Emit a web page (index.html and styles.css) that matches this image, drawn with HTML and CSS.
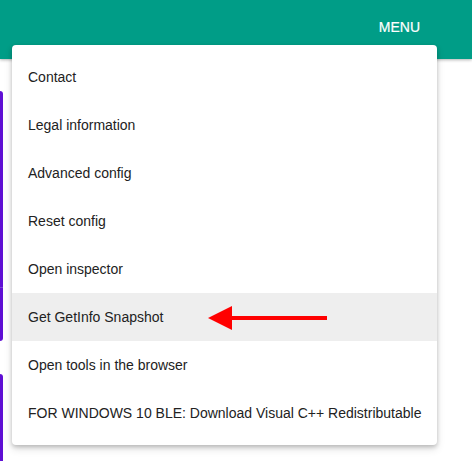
FILE: index.html
```html
<!DOCTYPE html>
<html>
<head>
<meta charset="utf-8">
<link rel="stylesheet" href="styles.css">
</head>
<body>
<header class="topbar">
  <span class="menu-btn">MENU</span>
</header>
<main class="content">
  <div class="card card-a"></div>
  <div class="card card-b"></div>
</main>
<ul class="menu">
  <li class="item">Contact</li>
  <li class="item">Legal information</li>
  <li class="item">Advanced config</li>
  <li class="item">Reset config</li>
  <li class="item">Open inspector</li>
  <li class="item active">Get GetInfo Snapshot
    <svg class="arrow" width="124" height="28" viewBox="0 0 124 28">
      <polygon points="0,13 24,1 24,25" fill="#ff0000"/>
      <rect x="22" y="11" width="97" height="4" fill="#ff0000"/>
    </svg>
  </li>
  <li class="item">Open tools in the browser</li>
  <li class="item">FOR WINDOWS 10 BLE: Download Visual C++ Redistributable</li>
</ul>
</body>
</html>
```
FILE: styles.css
```css
html, body {
  margin: 0;
  padding: 0;
  background: #ffffff;
  font-family: "Liberation Sans", Arial, sans-serif;
  overflow: hidden;
  height: 461px;
}
.topbar {
  height: 59px;
  background: #009d87;
  box-shadow: 0 1px 3px rgba(0,0,0,0.3);
  display: flex;
  justify-content: flex-end;
  align-items: flex-start;
  padding-right: 52px;
  box-sizing: border-box;
  position: relative;
  z-index: 1;
}
.menu-btn {
  color: #ffffff;
  font-size: 14px;
  margin-top: 19px;
  -webkit-text-stroke: 0.2px #ffffff;
}
.content {
  padding-top: 32px;
  display: flex;
  flex-direction: column;
  gap: 33px;
}
.card {
  width: 3px;
  background: #5f0fd4;
  border-radius: 0 3px 3px 0;
}
.card-a {
  height: 250px;
  background: linear-gradient(#5f0fd4 0, #5f0fd4 196px, #7a45d6 196px, #7a45d6 197px, #5f0fd4 197px);
}
.card-b {
  height: 87px;
  border-radius: 0 3px 0 0;
}
.menu {
  position: absolute;
  left: 12px;
  top: 45px;
  width: 425px;
  margin: 0;
  padding: 8px 0;
  list-style: none;
  background: #ffffff;
  border-radius: 4px;
  box-shadow: 0 2px 4px rgba(0,0,0,0.2), 0 4px 8px rgba(0,0,0,0.12);
  z-index: 2;
}
.item {
  height: 48px;
  display: flex;
  align-items: center;
  padding-left: 16px;
  font-size: 14px;
  color: #222222;
  position: relative;
}
.item.active {
  background: #eeeeee;
}
.arrow {
  position: absolute;
  left: 196px;
  top: 12px;
}
```
